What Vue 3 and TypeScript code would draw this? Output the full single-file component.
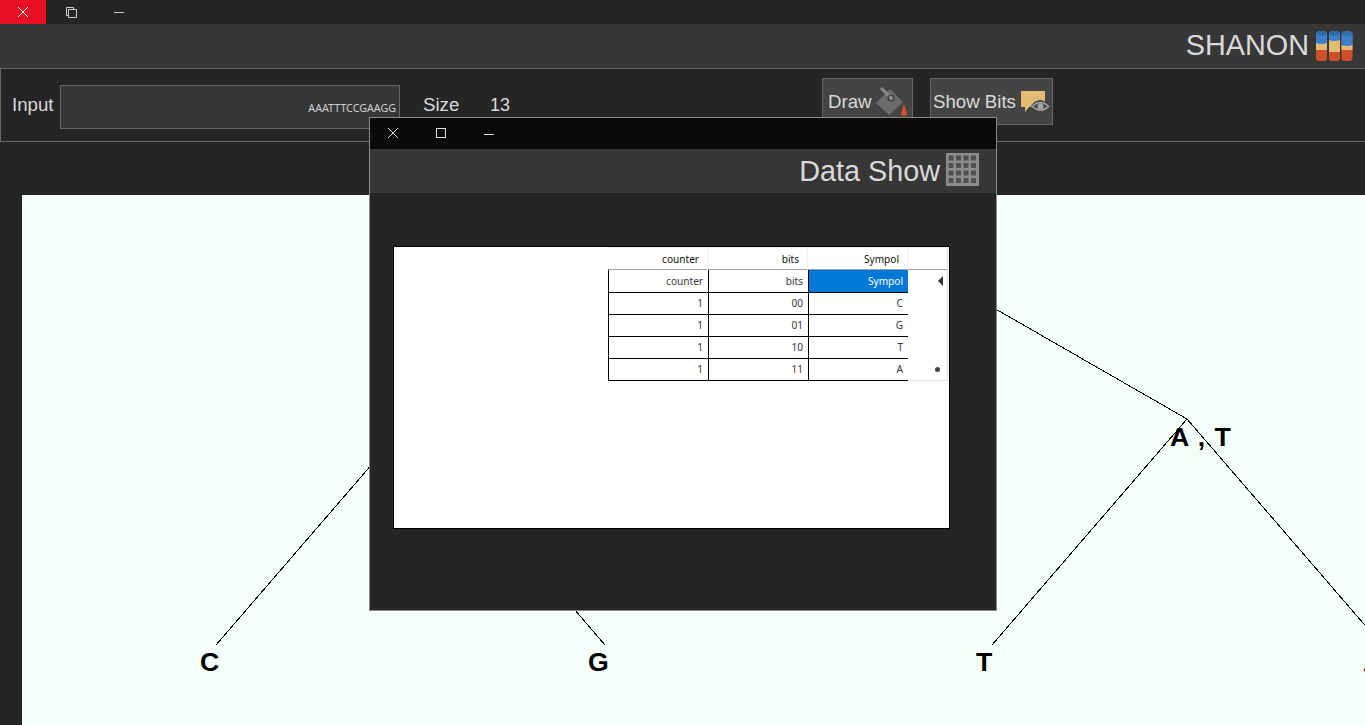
<script setup lang="ts">
import { ref } from 'vue'

// page coords minus the canvas origin (22, 195)
const originX = 22
const originY = 195

const treeLines = [
  [799, 196, 411, 419],
  [799, 196, 1187, 419],
  [411, 419, 216, 645],
  [411, 419, 605, 645],
  [1187, 419, 992, 645],
  [1187, 419, 1382, 645]
].map(([x1, y1, x2, y2]) => ({
  x1: x1 - originX,
  y1: y1 - originY,
  x2: x2 - originX,
  y2: y2 - originY
}))

const treeLabels = [
  { text: 'A , T', x: 1170, y: 422 },
  { text: 'C', x: 200, y: 647 },
  { text: 'G', x: 588, y: 647 },
  { text: 'T', x: 976, y: 647 },
  { text: 'A', x: 1363, y: 647 }
].map((l) => ({
  text: l.text,
  style: { left: `${l.x - originX}px`, top: `${l.y - originY}px` }
}))

const inputValue = ref('AAATTTCCGAAGG')
const size = ref(13)

const columns = ['counter', 'bits', 'Sympol']
const rows = [
  ['1', '00', 'C'],
  ['1', '01', 'G'],
  ['1', '10', 'T'],
  ['1', '11', 'A']
]
</script>

<template>
  <div class="app">
    <!-- main title bar -->
    <div class="titlebar">
      <div class="win-btn close">
        <svg width="10" height="10" viewBox="0 0 10 10"><path d="M0 0L10 10M10 0L0 10" stroke="#fff" fill="none" /></svg>
      </div>
      <div class="win-btn">
        <svg width="11" height="11" viewBox="0 0 11 11"><path d="M0.5 0.5H7.5V2.5M2.5 2.5H10.5V10.5H2.5ZM0.5 0.5V8.5H2.5" stroke="#ccc" fill="none" /></svg>
      </div>
      <div class="win-btn">
        <svg width="10" height="10" viewBox="0 0 10 10"><path d="M0 5.5H10" stroke="#ccc" fill="none" /></svg>
      </div>
    </div>

    <div class="header">
      <span class="big-title">SHANON</span>
      <svg class="logo" width="37" height="30" viewBox="0 0 37 30">
        <g v-for="(c, i) in [{ x: 0, b: 12, y: 19 }, { x: 13, b: 9, y: 21 }, { x: 25.5, b: 14, y: 19 }]" :key="i">
          <rect :x="c.x" y="1" width="11" height="29" rx="3" fill="#cf4f2b" />
          <rect :x="c.x" :y="c.b" width="11" :height="c.y - c.b" fill="#e2bc74" />
          <path :d="`M${c.x} ${c.b}V3Q${c.x} 0 ${c.x + 5.5} 0T${c.x + 11} 3V${c.b}Q${c.x + 5.5} ${c.b + 2} ${c.x} ${c.b}Z`" fill="#3a7fc8" />
          <ellipse :cx="c.x + 5.5" cy="2.5" rx="5.5" ry="2.5" fill="#2f6cab" />
        </g>
      </svg>
    </div>

    <!-- input panel -->
    <div class="panel">
      <span class="panel-label input-label">Input</span>
      <div class="input-box">{{ inputValue }}</div>
      <span class="panel-label size-label">Size</span>
      <span class="panel-label size-value">{{ size }}</span>
      <button class="tool-btn draw-btn">
        <span>Draw</span>
        <svg width="33" height="30" viewBox="0 0 33 30">
          <path d="M1 16L15 2L28 15L14 28Z" fill="#6b6b6b" />
          <path d="M6 1L18 13" stroke="#8a8a8a" stroke-width="3" fill="none" />
          <circle cx="16" cy="11" r="3" fill="none" stroke="#3d3d3d" stroke-width="1.2" />
          <path d="M29 17Q27 23 26 26Q26 29 29 29Q32 29 32 26Q31 23 29 17Z" fill="#cf4f2b" />
        </svg>
      </button>
      <button class="tool-btn bits-btn">
        <span>Show Bits</span>
        <svg width="29" height="24" viewBox="0 0 29 24">
          <path d="M1 1H25V17H9L5 22V17H1Z" fill="#e2bc74" />
          <path d="M10 17Q19 4 29 15V23H11Z" fill="#444" />
          <path d="M12 16.5Q20.500 8.500 28.500 16.500Q20.500 23.500 12 16.500Z" fill="none" stroke="#a5a5a5" stroke-width="1.6" />
          <circle cx="20.500" cy="16.300" r="3" fill="#a5a5a5" />
        </svg>
      </button>
    </div>

    <!-- drawing area -->
    <div class="canvas-wrap">
      <div class="canvas">
        <svg class="tree" width="1343" height="530">
          <line
            v-for="(l, i) in treeLines"
            :key="i"
            :x1="l.x1"
            :y1="l.y1"
            :x2="l.x2"
            :y2="l.y2"
            stroke="#000"
            shape-rendering="crispEdges"
          />
        </svg>
        <span v-for="l in treeLabels" :key="l.text + l.style.left" class="node-label" :style="l.style">{{ l.text }}</span>
      </div>
    </div>

    <!-- floating data window -->
    <div class="dialog">
      <div class="dialog-bar">
        <div class="win-btn first">
          <svg width="10" height="10" viewBox="0 0 10 10"><path d="M0 0L10 10M10 0L0 10" stroke="#ddd" fill="none" /></svg>
        </div>
        <div class="win-btn">
          <svg width="10" height="10" viewBox="0 0 10 10"><rect x="0.5" y="0.5" width="9" height="9" stroke="#ddd" fill="none" /></svg>
        </div>
        <div class="win-btn">
          <svg width="10" height="10" viewBox="0 0 10 10"><path d="M0 6.500H10" stroke="#ddd" fill="none" /></svg>
        </div>
      </div>
      <div class="dialog-header">
        <span class="big-title">Data Show</span>
        <svg class="grid-icon" width="33" height="33" viewBox="0 0 33 33">
          <rect width="33" height="33" fill="#8c8c8c" />
          <g v-for="r in 4" :key="r">
            <rect v-for="c in 4" :key="c" :x="2.500 + (c - 1) * 7.500" :y="2.500 + (r - 1) * 7.500" width="5" height="5" fill="#505050" />
          </g>
        </svg>
      </div>
      <div class="dialog-body">
        <div class="grid-box">
          <div class="grid">
            <div class="head-row">
              <div v-for="c in columns" :key="c" class="head-cell">{{ c }}</div>
              <div class="head-cell side"></div>
            </div>
            <div class="data-row">
              <div v-for="c in columns" :key="c" class="cell" :class="{ selected: c === 'Sympol' }">{{ c }}</div>
              <div class="side-cell"><span class="arrow"></span></div>
            </div>
            <div v-for="(row, i) in rows" :key="i" class="data-row">
              <div v-for="(v, j) in row" :key="j" class="cell">{{ v }}</div>
              <div class="side-cell"><span v-if="i === rows.length - 1" class="dot"></span></div>
            </div>
          </div>
        </div>
      </div>
    </div>
  </div>
</template>

<style scoped>
.app {
  position: relative;
  display: flex;
  flex-direction: column;
  width: 1365px;
  height: 725px;
  overflow: hidden;
  background: #252525;
  font-family: "Liberation Sans", Arial, sans-serif;
  color: #d9d9d9;
}

.titlebar {
  display: flex;
  height: 24px;
  flex: none;
}

.win-btn {
  width: 48px;
  display: flex;
  align-items: center;
  justify-content: center;
}

.win-btn.close {
  width: 46px;
  margin-right: 1px;
  background: #e81123;
}

.header {
  height: 44px;
  flex: none;
  display: flex;
  align-items: center;
  justify-content: flex-end;
  gap: 7px;
  padding-right: 12px;
  background: #373737;
}

.big-title {
  font-size: 28.8px;
  line-height: 42px;
  margin-bottom: 2px;
}

.logo {
  margin-top: -1px;
}

.panel {
  height: 74px;
  flex: none;
  box-sizing: border-box;
  display: flex;
  align-items: flex-start;
  border: 1px solid #666;
  border-right: none;
  padding-top: 16px;
}

.panel-label {
  font-size: 18.67px;
  line-height: 40px;
}

.input-label {
  margin-left: 11px;
  width: 48px;
}

.input-box {
  width: 340px;
  height: 44px;
  box-sizing: border-box;
  background: #373737;
  border: 1px solid #666;
  font-family: "Noto Sans", sans-serif;
  font-size: 10.7px;
  line-height: 44px;
  text-align: right;
  padding-right: 3px;
  color: #d0d0d0;
}

.size-label {
  margin-left: 23px;
  width: 67px;
}

.size-value {
  width: 332px;
  font-size: 18px;
}

.tool-btn {
  display: flex;
  align-items: center;
  box-sizing: border-box;
  height: 47px;
  margin-top: -7px;
  padding: 0;
  background: #444;
  border: 1px solid #666;
  color: #d9d9d9;
  font-family: inherit;
  font-size: 18.67px;
}

.draw-btn {
  width: 91px;
  padding-left: 5px;
  gap: 3px;
}

.bits-btn {
  width: 123px;
  margin-left: 17px;
  padding-left: 2px;
  gap: 4px;
}

.canvas-wrap {
  flex: 1;
  padding: 53px 0 0 22px;
  min-height: 0;
}

.canvas {
  position: relative;
  height: 530px;
  background: #f5fffa;
  overflow: hidden;
}

.tree {
  position: absolute;
  left: 0;
  top: 0;
}

.node-label {
  position: absolute;
  font-family: "Liberation Sans", Arial, sans-serif;
  font-weight: bold;
  font-size: 26.67px;
  word-spacing: 2px;
  line-height: 30px;
  color: #000;
  white-space: pre;
}

.dialog {
  position: absolute;
  left: 369px;
  top: 117px;
  width: 628px;
  height: 494px;
  box-sizing: border-box;
  border: 1px solid #8a8a8a;
  background: #252525;
  display: flex;
  flex-direction: column;
}

.dialog-bar {
  display: flex;
  height: 31px;
  flex: none;
  box-sizing: border-box;
  padding-bottom: 2px;
  background: #0a0a0a;
}

.win-btn.first {
  width: 46px;
  margin-right: 1px;
}

.dialog-header {
  height: 44px;
  flex: none;
  display: flex;
  align-items: center;
  justify-content: flex-end;
  gap: 6px;
  padding-right: 17px;
  background: #373737;
}

.dialog-header .big-title {
  margin-bottom: 0;
}

.grid-icon {
  margin-top: -3px;
}

.dialog-body {
  padding: 53px 0 0 23px;
}

.grid-box {
  width: 557px;
  height: 283px;
  box-sizing: border-box;
  border: 1px solid #000;
  background: #fff;
  display: flex;
  justify-content: flex-end;
  padding-right: 1px;
}

.grid {
  width: 340px;
  font-family: "Noto Sans", sans-serif;
  font-size: 10.1px;
}

.head-row,
.data-row {
  display: grid;
  grid-template-columns: 100px 100px 100px 40px;
}

.head-row {
  height: 23px;
  box-sizing: border-box;
  border-bottom: 1px solid #a0a0a0;
}

.head-cell {
  box-sizing: border-box;
  text-align: right;
  padding-right: 8px;
  line-height: 22px;
  color: #111;
  border-right: 1px solid #eee;
  border-top: 1px solid #eee;
}

.head-cell.side {
  padding: 0;
  border-right: 1px solid #e0e0e0;
}

.data-row {
  height: 22px;
}

.cell {
  box-sizing: border-box;
  text-align: right;
  padding-right: 5px;
  line-height: 22px;
  color: #3a3344;
  border-left: 1px solid #000;
  border-bottom: 1px solid #000;
}

.cell.selected {
  background: #0078d7;
  color: #fff;
  border-left-color: #000;
  border-bottom-color: #000;
}

.side-cell {
  box-sizing: border-box;
  display: flex;
  align-items: center;
  justify-content: flex-end;
  border-right: 1px solid #e0e0e0;
  border-bottom: 1px solid #e3e3e3;
  background: #fff;
}

.arrow {
  width: 0;
  height: 0;
  margin-right: 4px;
  border-style: solid;
  border-width: 5px 5px 5px 0;
  border-color: transparent #333 transparent transparent;
}

.dot {
  width: 5px;
  height: 5px;
  margin-right: 7px;
  border-radius: 50%;
  background: #444;
}
</style>

<style>
html,
body {
  margin: 0;
  background: #252525;
  overflow: hidden;
}
</style>
